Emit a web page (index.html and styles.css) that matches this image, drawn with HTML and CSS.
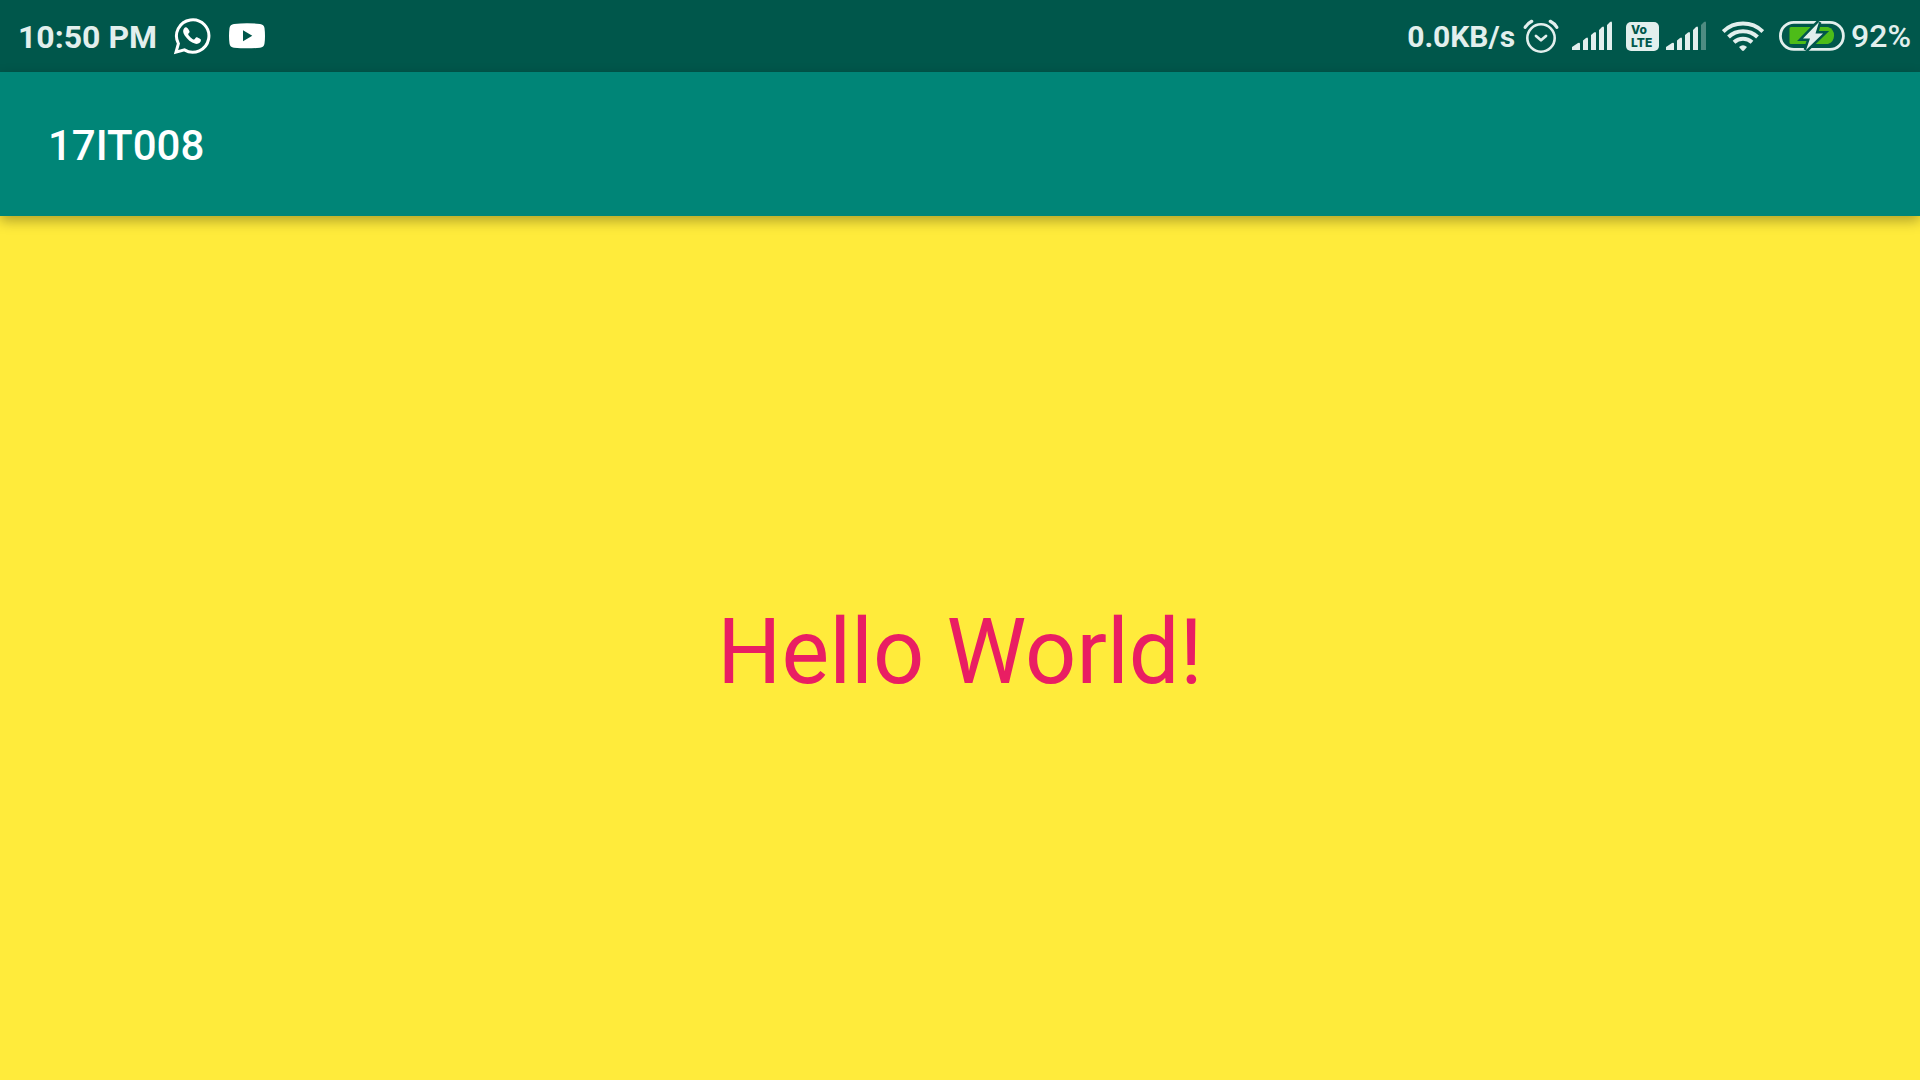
FILE: index.html
```html
<!DOCTYPE html>
<html lang="en">
<head>
<meta charset="utf-8">
<meta name="viewport" content="width=device-width, initial-scale=1">
<title>17IT008</title>
<link rel="stylesheet" href="styles.css">
</head>
<body>
<div class="status-bar">
  <div class="status-left">
    <span class="clock">10:50 PM</span>
    <svg class="whatsapp" width="38" height="38" viewBox="0 0 38 38" aria-label="WhatsApp">
      <path d="M3 35.200L5.400 26.600A16.200 16.200 0 1 1 11.400 32.900Z" fill="none" stroke="#fff" stroke-width="3"/>
      <path d="M13.600 10.400C12.600 10 11.800 10.400 11 11.500C9.600 13.400 10 16 11.700 18.400C14.500 22.500 17.800 25.500 22.500 26.800C25.300 27.400 28 25.600 28 22.800C28 22.200 24.300 20.100 23.300 20.300C22.500 20.500 21.800 22.500 21 22.500C19.500 22.500 15.500 18.700 15.200 17.200C15.200 16.400 16.600 15.700 16.600 14.800C16.400 13.800 15 10.800 13.600 10.400Z" fill="#fff"/>
    </svg>
    <svg class="youtube" width="36" height="26" viewBox="0 0 36 26" aria-label="YouTube">
      <path fill="#fff" fill-rule="evenodd" d="M5 .900Q18-.500 31 .900Q35 1.300 35.500 5Q36.500 13 35.500 20.500Q35 24.300 31 24.700Q18 26 5 24.700Q1 24.300.500 20.500Q-.500 13 .500 5Q1 1.300 5 .900ZM14 7.300V18.200L23.300 12.700Z"/>
    </svg>
  </div>
  <div class="status-right">
    <span class="speed">0.0KB/s</span>
    <svg class="alarm" width="36" height="36" viewBox="0 0 36 36" aria-label="Alarm">
      <g fill="none" stroke="currentColor" stroke-linecap="round" stroke-linejoin="round">
        <circle cx="18" cy="20" r="13.700" stroke-width="2.600"/>
        <path d="M13 18L18 22.300L23 18" stroke-width="2.800"/>
        <path d="M2.200 9.300Q4.500 5.400 8.700 3.300M27.300 3.300Q31.500 5.400 33.800 9.300" stroke-width="3.200"/>
      </g>
    </svg>
    <svg class="signal" width="40" height="30" viewBox="0 0 40 30" aria-label="Signal, first line">
      <path fill="currentColor" d="M0 29V26L6 22Q8 21 8 23V29ZM11 29V19.500L14 17Q16 15.500 16 18V29ZM19 29V14L22 11.500Q24 10 24 12.500V29ZM27 29V9L30 6Q32 4.500 32 7V29ZM35 29V4L38 1Q40-.500 40 2V29Z"/>
    </svg>
    <span class="volte"><span>Vo</span><span>LTE</span></span>
    <svg class="signal second" width="40" height="30" viewBox="0 0 40 30" aria-label="Signal, second line">
      <path fill="currentColor" d="M0 29V26L6 22Q8 21 8 23V29ZM11 29V19.500L14 17Q16 15.500 16 18V29ZM19 29V14L22 11.500Q24 10 24 12.500V29ZM27 29V9L30 6Q32 4.500 32 7V29Z"/>
      <path fill="#4f8c82" d="M35 29V4L38 1Q40-.500 40 2V29Z"/>
    </svg>
    <svg class="wifi" width="42" height="30" viewBox="0 0 42 30" aria-label="Wi-Fi">
      <g fill="none" stroke="currentColor" stroke-width="4">
        <path d="M1.200 10.500A28.500 28.500 0 0 1 40.800 10.500"/>
        <path d="M6.500 16A21 21 0 0 1 35.500 16"/>
        <path d="M12 21.300A13.500 13.500 0 0 1 30 21.300"/>
      </g>
      <path fill="currentColor" d="M17 26Q21 22.500 25 26L22 29.500Q21 30.300 20 29.500Z"/>
    </svg>
    <svg class="battery" width="66" height="30" viewBox="0 0 66 30" aria-label="Battery charging">
      <rect x="1.400" y="1.400" width="63" height="27" rx="13.500" fill="none" stroke="currentColor" stroke-width="2.800"/>
      <path fill="#4dbc18" d="M12 6H49A9 9 0 0 1 49 23H12Q10.500 23 10.500 21.500V7.500Q10.500 6 12 6Z"/>
      <path fill="currentColor" stroke="#00574b" stroke-width="5" d="M40 1L24 17.500H31L27 29L44 12.500H36.500Z"/>
      <path fill="currentColor" d="M40 1L24 17.500H31L27 29L44 12.500H36.500Z"/>
    </svg>
    <span class="percent">92%</span>
  </div>
</div>
<header class="app-bar">
  <h1 class="app-title">17IT008</h1>
</header>
<main class="content">
  <p class="greeting">Hello World!</p>
</main>
</body>
</html>
```
FILE: styles.css
```css
* {
  box-sizing: border-box;
}

body {
  margin: 0;
  min-height: 100vh;
  display: flex;
  flex-direction: column;
  background: #ffeb3b;
  font-family: Roboto, sans-serif;
}

svg {
  display: block;
  flex: none;
}

.status-bar {
  height: 72px;
  padding: 0 9px 0 18px;
  display: flex;
  align-items: center;
  justify-content: space-between;
  background: #00574b;
  color: #e2efed;
  white-space: nowrap;
}

.status-left,
.status-right {
  display: flex;
  align-items: center;
}

.clock {
  padding-top: 2px;
  font-size: 32px;
  font-weight: 700;
}

.whatsapp {
  margin-left: 16px;
}

.youtube {
  margin-left: 18px;
}

.speed {
  padding-top: 1px;
  font-size: 30px;
  font-weight: 700;
}

.alarm {
  margin-left: 8px;
}

.signal {
  margin-left: 13px;
}

.volte {
  width: 33px;
  height: 29px;
  margin-left: 14px;
  padding: 1px 0 0 5px;
  border-radius: 5px;
  display: flex;
  flex-direction: column;
  background: #e2efed;
  color: #00574b;
  font-family: Inter, sans-serif;
  font-size: 12px;
  font-weight: 800;
  line-height: 13px;
}

.second {
  margin-left: 7px;
}

.wifi {
  margin-left: 16px;
}

.battery {
  margin-left: 15px;
}

.percent {
  margin-left: 6px;
  font-size: 32px;
  font-weight: 500;
}

.app-bar {
  height: 144px;
  padding: 2px 48px 0;
  display: flex;
  align-items: center;
  background: #008577;
  box-shadow: 0 5px 12px rgba(0, 0, 0, 0.3);
}

.app-title {
  margin: 0;
  color: #fff;
  font-size: 42px;
  font-weight: 500;
}

.content {
  flex: 1;
  padding-top: 8px;
  display: flex;
  align-items: center;
  justify-content: center;
}

.greeting {
  margin: 0;
  color: #e91e63;
  font-size: 90px;
}
```
